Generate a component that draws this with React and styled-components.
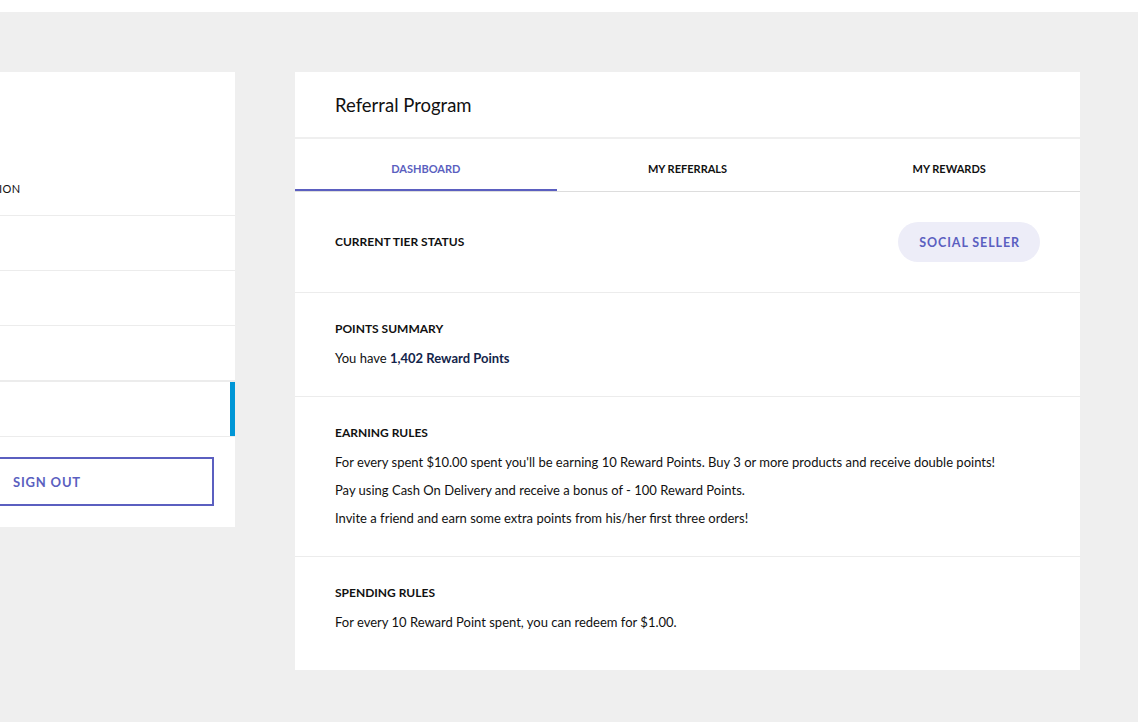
import React from 'react';
import styled, { createGlobalStyle } from 'styled-components';

const GlobalStyle = createGlobalStyle`
  html, body {
    margin: 0;
    padding: 0;
    background: #ffffff;
    overflow: hidden;
  }
  body {
    font-family: 'Lato', 'Liberation Sans', sans-serif;
    color: #111111;
  }
`;

const TopBar = styled.div`
  height: 12px;
  background: #ffffff;
`;

const Page = styled.div`
  background: #efefef;
  min-height: 710px;
  overflow: hidden;
  padding-top: 60px;
  box-sizing: border-box;
`;

const Layout = styled.div`
  display: flex;
  align-items: flex-start;
  gap: 60px;
  margin-left: -140px;
`;

const Sidebar = styled.aside`
  width: 375px;
  flex-shrink: 0;
  background: #ffffff;
  padding-top: 89px;
`;

const NavItem = styled.div`
  height: 54px;
  display: flex;
  align-items: center;
  padding-left: 20px;
  font-size: 11px;
  letter-spacing: 0.4px;
  color: #111111;
  border-bottom: 1px solid #ececec;
  border-top: ${(p) => (p.$active ? '1px solid #ececec' : 'none')};
  position: relative;

  &::after {
    content: '';
    display: ${(p) => (p.$active ? 'block' : 'none')};
    position: absolute;
    right: 0;
    top: 0;
    bottom: 0;
    width: 5px;
    background: #0096d6;
  }
`;

const SignOutWrap = styled.div`
  padding: 20px 21px 21px 20px;
`;

const SignOutButton = styled.button`
  display: block;
  width: 100%;
  height: 49px;
  background: #ffffff;
  border: 2px solid #5b5fc0;
  color: #5b5fc0;
  font-family: inherit;
  font-size: 13px;
  font-weight: 700;
  letter-spacing: 0.8px;
  cursor: pointer;
`;

const Main = styled.main`
  width: 785px;
  flex-shrink: 0;
  background: #ffffff;
  padding-bottom: 10px;
`;

const PanelHeader = styled.div`
  height: 65px;
  display: flex;
  align-items: center;
  padding: 0 40px;
  font-size: 18.5px;
  color: #111111;
  border-bottom: 2px solid #efefef;
`;

const Tabs = styled.div`
  display: grid;
  grid-template-columns: repeat(3, 1fr);
  border-bottom: 1px solid #dddddd;
`;

const Tab = styled.div`
  height: 52px;
  box-sizing: border-box;
  padding-top: 6px;
  display: flex;
  align-items: center;
  justify-content: center;
  font-size: 11px;
  font-weight: 700;
  color: ${(p) => (p.$active ? '#5b5fc0' : '#111111')};
  box-shadow: ${(p) => (p.$active ? 'inset 0 -2px 0 #5b5fc0' : 'none')};
  cursor: pointer;
`;

const Section = styled.section`
  padding: ${(p) => (p.$row ? '30px 40px' : '28px 40px 29px')};
  border-bottom: ${(p) => (p.$last ? 'none' : '1px solid #ececec')};
  display: ${(p) => (p.$row ? 'flex' : 'block')};
  align-items: center;
  justify-content: space-between;
`;

const SectionTitle = styled.h3`
  margin: 0;
  font-size: 12px;
  line-height: 16px;
  font-weight: 700;
  color: #111111;
`;

const Body = styled.p`
  margin: 12px 0 0;
  font-size: 13px;
  line-height: 18px;
  color: #111111;

  & + & {
    margin-top: 10px;
  }
`;

const Highlight = styled.strong`
  color: #13244a;
  font-weight: 700;
`;

const Badge = styled.span`
  display: inline-flex;
  align-items: center;
  height: 40px;
  padding: 0 20px 0 21px;
  border-radius: 20px;
  background: #ededf8;
  color: #5b5fc0;
  font-size: 12.5px;
  font-weight: 700;
  letter-spacing: 0.9px;
`;

const navItems = ['ACCOUNT INFORMATION', 'MY ORDERS', 'ADDRESSES', 'WISHLIST'];

export default function App() {
  return (
    <>
      <GlobalStyle />
      <TopBar />
      <Page>
        <Layout>
          <Sidebar>
            {navItems.map((item) => (
              <NavItem key={item}>{item}</NavItem>
            ))}
            <NavItem $active>REFERRAL</NavItem>
            <SignOutWrap>
              <SignOutButton>SIGN OUT</SignOutButton>
            </SignOutWrap>
          </Sidebar>
          <Main>
            <PanelHeader>Referral Program</PanelHeader>
            <Tabs>
              <Tab $active>DASHBOARD</Tab>
              <Tab>MY REFERRALS</Tab>
              <Tab>MY REWARDS</Tab>
            </Tabs>
            <Section $row>
              <SectionTitle>CURRENT TIER STATUS</SectionTitle>
              <Badge>SOCIAL SELLER</Badge>
            </Section>
            <Section>
              <SectionTitle>POINTS SUMMARY</SectionTitle>
              <Body>
                You have <Highlight>1,402 Reward Points</Highlight>
              </Body>
            </Section>
            <Section>
              <SectionTitle>EARNING RULES</SectionTitle>
              <Body>
                For every spent $10.00 spent you'll be earning 10 Reward Points. Buy 3 or more products and receive double points!
              </Body>
              <Body>Pay using Cash On Delivery and receive a bonus of - 100 Reward Points.</Body>
              <Body>Invite a friend and earn some extra points from his/her first three orders!</Body>
            </Section>
            <Section $last>
              <SectionTitle>SPENDING RULES</SectionTitle>
              <Body>For every 10 Reward Point spent, you can redeem for $1.00.</Body>
            </Section>
          </Main>
        </Layout>
      </Page>
    </>
  );
}
